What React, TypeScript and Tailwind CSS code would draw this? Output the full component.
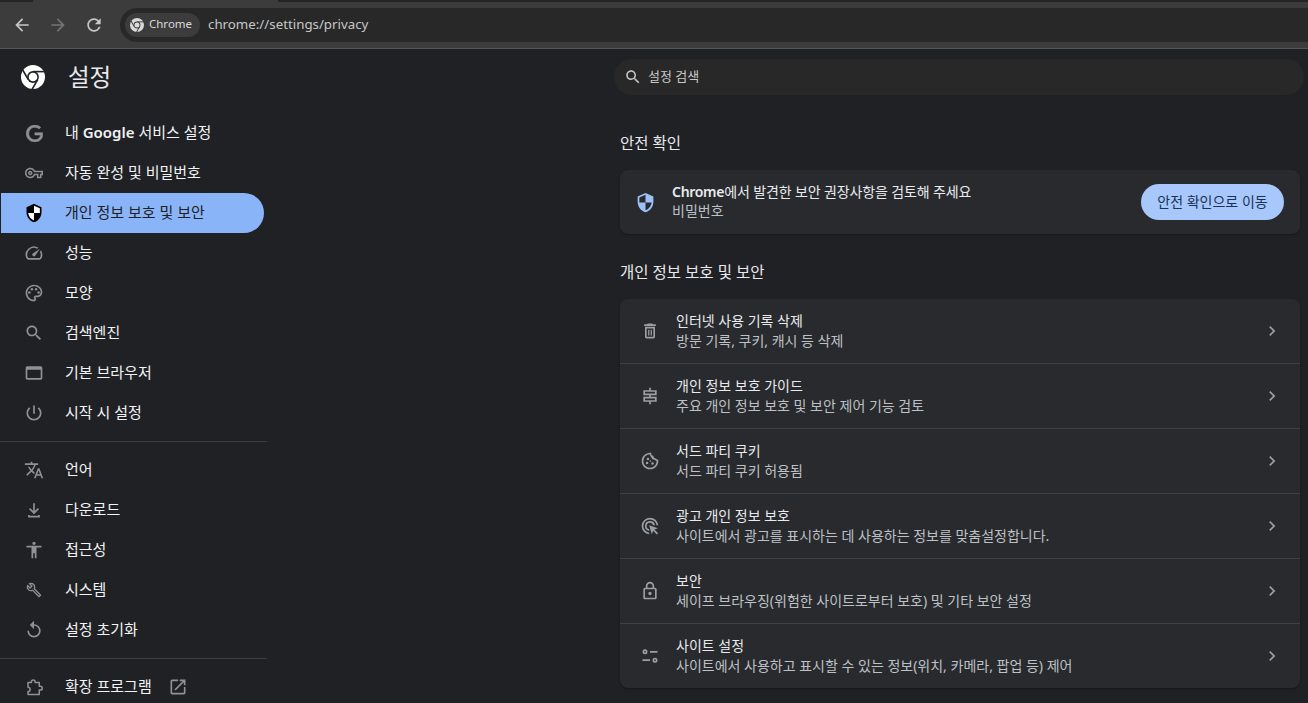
import type { ReactNode } from 'react';

const FONT = "font-['Noto_Sans','Noto_Sans_CJK_KR',sans-serif]";

function Icon({ children, className = 'h-5 w-5' }: { children: ReactNode; className?: string }) {
  return (
    <svg viewBox="0 0 24 24" fill="currentColor" className={className}>
      {children}
    </svg>
  );
}

// 크롬 로고: 흰 원 + 가운데 링 + 세 갈래 틈
function ChromeLogo({ className, gap }: { className: string; gap: string }) {
  return (
    <svg viewBox="0 0 24 24" className={className}>
      <circle cx="12" cy="12" r="12" fill="currentColor" />
      {[0, 120, 240].map((deg) => (
        <path key={deg} d="M12 6.6H23.5" stroke={gap} strokeWidth="1.6" transform={`rotate(${deg} 12 12)`} />
      ))}
      <circle cx="12" cy="12" r="5.9" fill={gap} />
      <circle cx="12" cy="12" r="4.3" fill="currentColor" />
    </svg>
  );
}

const Shield = ({ body, quad, mirror, className }: { body: string; quad: string; mirror?: boolean; className: string }) => (
  <svg viewBox="0 0 24 24" className={className}>
    <path fill={body} d="M12 1 3 5v6c0 5.55 3.84 10.74 9 12 5.16-1.26 9-6.45 9-12V5l-9-4z" />
    <path
      fill={quad}
      transform={mirror ? 'translate(24 0) scale(-1 1)' : undefined}
      d="M12 3.2 19 6.3V12h-7V3.2zM12 12v8.9c-3.7-1.15-6.45-4.8-7-8.9h7z"
    />
  </svg>
);

const icons: Record<string, ReactNode> = {
  google: (
    <Icon className="h-[17px] w-[17px] stroke-current stroke-[0.8]">
      <path d="M12.48 10.92v3.28h7.84c-.24 1.84-.853 3.187-1.787 4.133-1.147 1.147-2.933 2.4-6.053 2.4-4.827 0-8.6-3.893-8.6-8.72s3.773-8.72 8.6-8.72c2.6 0 4.507 1.027 5.907 2.347l2.307-2.307C18.747 1.44 16.133 0 12.48 0 5.867 0 .307 5.387.307 12s5.56 12 12.173 12c3.573 0 6.267-1.173 8.373-3.36 2.16-2.16 2.84-5.213 2.84-7.667 0-.76-.053-1.467-.173-2.053H12.48z" />
    </Icon>
  ),
  key: (
    <Icon className="h-[18px] w-[18px]">
      <path d="M22 19h-6v-4h-2.68c-1.14 2.42-3.6 4-6.32 4-3.86 0-7-3.14-7-7s3.14-7 7-7c2.72 0 5.17 1.58 6.32 4H24v6h-2v4zm-4-2h2v-4h2v-2H11.94l-.23-.67C11.01 8.34 9.11 7 7 7c-2.76 0-5 2.24-5 5s2.24 5 5 5c2.11 0 4.01-1.34 4.71-3.33l.23-.67H18v4zM7 15c-1.65 0-3-1.35-3-3s1.35-3 3-3 3 1.35 3 3-1.35 3-3 3zm0-4c-.55 0-1 .45-1 1s.45 1 1 1 1-.45 1-1-.45-1-1-1z" />
    </Icon>
  ),
  shield: <Shield body="#000000" quad="#ffffff" className="h-5 w-5" />,
  speed: (
    <Icon>
      <path d="M20.38 8.57l-1.23 1.85a8 8 0 0 1-.22 7.58H5.07A8 8 0 0 1 15.58 6.85l1.85-1.23A10 10 0 0 0 3.35 19a2 2 0 0 0 1.72 1h13.85a2 2 0 0 0 1.74-1 10 10 0 0 0-.27-10.44zm-9.79 6.84a2 2 0 0 0 2.83 0l5.66-8.49-8.49 5.66a2 2 0 0 0 0 2.83z" />
    </Icon>
  ),
  palette: (
    <Icon>
      <path d="M12 22C6.49 22 2 17.51 2 12S6.49 2 12 2s10 4.04 10 9c0 3.31-2.69 6-6 6h-1.77c-.28 0-.5.22-.5.5 0 .12.05.23.13.33.41.47.64 1.06.64 1.67 0 1.38-1.12 2.5-2.5 2.5zm0-18c-4.41 0-8 3.59-8 8s3.59 8 8 8c.28 0 .5-.22.5-.5 0-.16-.08-.28-.14-.35-.41-.46-.63-1.05-.63-1.65 0-1.38 1.12-2.5 2.5-2.5H16c2.21 0 4-1.79 4-4 0-3.86-3.59-7-8-7z" />
      <circle cx="6.5" cy="11.5" r="1.5" />
      <circle cx="9.5" cy="7.5" r="1.5" />
      <circle cx="14.5" cy="7.5" r="1.5" />
      <circle cx="17.5" cy="11.5" r="1.5" />
    </Icon>
  ),
  search: (
    <Icon>
      <path d="M15.5 14h-.79l-.28-.27C15.41 12.59 16 11.11 16 9.5 16 5.91 13.09 3 9.5 3S3 5.91 3 9.5 5.91 16 9.5 16c1.61 0 3.09-.59 4.23-1.57l.27.28v.79l5 4.99L20.49 19l-4.99-5zm-6 0C7.01 14 5 11.99 5 9.5S7.01 5 9.5 5 14 7.01 14 9.5 11.99 14 9.5 14z" />
    </Icon>
  ),
  browser: (
    <Icon>
      <path d="M20 4H4c-1.1 0-2 .9-2 2v12c0 1.1.9 2 2 2h16c1.1 0 2-.9 2-2V6c0-1.1-.9-2-2-2zm0 14H4V8h16v10z" />
    </Icon>
  ),
  power: (
    <Icon>
      <path d="M13 3h-2v10h2V3zm4.83 2.17l-1.42 1.42C17.99 7.86 19 9.81 19 12c0 3.87-3.13 7-7 7s-7-3.13-7-7c0-2.19 1.01-4.14 2.58-5.42L6.17 5.17C4.23 6.82 3 9.26 3 12c0 4.97 4.03 9 9 9s9-4.03 9-9c0-2.74-1.23-5.18-3.17-6.83z" />
    </Icon>
  ),
  translate: (
    <Icon>
      <path d="M12.87 15.07l-2.54-2.51.03-.03c1.74-1.94 2.98-4.17 3.71-6.53H17V4h-7V2H8v2H1v1.99h11.17C11.5 7.92 10.44 9.75 9 11.35 8.07 10.32 7.3 9.19 6.69 8h-2c.73 1.63 1.73 3.17 2.98 4.56l-5.09 5.02L4 19l5-5 3.11 3.11.76-2.04zM18.5 10h-2L12 22h2l1.12-3h4.75L21 22h2l-4.5-12zm-2.62 7l1.62-4.33L19.12 17h-3.24z" />
    </Icon>
  ),
  download: (
    <Icon>
      <path d="M11 4h2v9.2l3.6-3.6L18 11l-6 6-6-6 1.4-1.4 3.6 3.6V4zM5 18h2v1h10v-1h2v3H5v-3z" />
    </Icon>
  ),
  accessibility: (
    <Icon>
      <path d="M12 2c1.1 0 2 .9 2 2s-.9 2-2 2-2-.9-2-2 .9-2 2-2zm9 7h-6v13h-2v-6h-2v6H9V9H3V7h18v2z" />
    </Icon>
  ),
  wrench: (
    <Icon className="h-4 w-4">
      <path d="M22.61 18.99l-9.08-9.08c.93-2.34.45-5.1-1.44-7C9.79.61 6.21.4 3.66 2.25L7.5 6.1 6.08 7.5 2.25 3.69C.39 6.23.61 9.82 2.91 12.11c1.86 1.86 4.57 2.35 6.89 1.48l9.11 9.11c.39.39 1.02.39 1.41 0l2.3-2.3c.4-.38.4-1.01-.01-1.41zm-3 1.6l-9.46-9.46c-.61.45-1.29.72-2 .82-1.36.2-2.79-.21-3.83-1.25C3.37 9.76 2.93 8.5 3 7.26l3.09 3.09 4.24-4.24-3.09-3.09c1.24-.07 2.49.37 3.44 1.31 1.08 1.08 1.49 2.57 1.24 3.96-.12.71-.42 1.37-.88 1.96l9.45 9.45-.88.88z" />
    </Icon>
  ),
  reset: (
    <Icon>
      <path d="M12 5V1L7 6l5 5V7c3.31 0 6 2.69 6 6s-2.69 6-6 6-6-2.69-6-6H4c0 4.42 3.58 8 8 8s8-3.58 8-8-3.58-8-8-8z" />
    </Icon>
  ),
  extension: (
    <Icon className="h-[18px] w-[18px]">
      <path
        fill="none"
        stroke="currentColor"
        strokeWidth="2"
        strokeLinejoin="round"
        d="M4 6h4.5V5a2.5 2.5 0 0 1 5 0v1H19v5h1.5a2.5 2.5 0 0 1 0 5H19v6H4v-4a2.8 2.8 0 0 0 0-5.6V6z"
      />
    </Icon>
  ),
  trash: (
    <Icon>
      <path d="M6 19c0 1.1.9 2 2 2h8c1.1 0 2-.9 2-2V7H6v12zM8 9h8v10H8V9zm7.5-5l-1-1h-5l-1 1H5v2h14V4h-3.5z" />
      <path d="M9.75 10.5h1.5v7h-1.5zM12.75 10.5h1.5v7h-1.5z" />
    </Icon>
  ),
  signpost: (
    <Icon>
      <path d="M11 2h2v3h7v6h-7v2h7v6h-7v3h-2v-3H4v-6h7v-2H4V5h7V2zM6 7v2h12V7H6zm0 8v2h12v-2H6z" />
    </Icon>
  ),
  cookie: (
    <Icon>
      <path d="M12 2c.6 0 1.1.05 1.6.13a3 3 0 0 0 2.6 3.7 3 3 0 0 0 3.1 3.1 3 3 0 0 0 2.55 1.6c.1.5.15.97.15 1.47 0 5.5-4.5 10-10 10S2 17.5 2 12 6.5 2 12 2zm0 2a8 8 0 1 0 8 8v-.1a5 5 0 0 1-2.2-1.2 5 5 0 0 1-4.4-3.3A5 5 0 0 1 11.9 4H12z" />
      <circle cx="9.5" cy="9.5" r="1.5" />
      <circle cx="8.5" cy="14.5" r="1.5" />
      <circle cx="15" cy="15" r="1.5" />
      <circle cx="12.5" cy="12" r="1" />
    </Icon>
  ),
  adPrivacy: (
    <Icon>
      <path d="M11 22a10 10 0 1 1 10.9-10.9h-2A8 8 0 1 0 11 20v2z" />
      <path d="M11 17.9a6 6 0 1 1 6.9-6.9h-2.05A4 4 0 1 0 11 15.85v2.05z" />
      <path d="M11 11l10.5 3.6-4.3 1.7 4.5 4.5-1.4 1.4-4.5-4.5-1.7 4.3L11 11z" />
    </Icon>
  ),
  lock: (
    <Icon>
      <path d="M18 8h-1V6c0-2.76-2.24-5-5-5S7 3.24 7 6v2H6c-1.1 0-2 .9-2 2v10c0 1.1.9 2 2 2h12c1.1 0 2-.9 2-2V10c0-1.1-.9-2-2-2zM9 6c0-1.66 1.34-3 3-3s3 1.34 3 3v2H9V6zm9 14H6V10h12v10zm-6-3c1.1 0 2-.9 2-2s-.9-2-2-2-2 .9-2 2 .9 2 2 2z" />
    </Icon>
  ),
  tune: (
    <Icon>
      <path d="M6 4a3 3 0 1 1 0 6 3 3 0 0 1 0-6zm0 2a1 1 0 1 0 0 2 1 1 0 0 0 0-2zM12 6h9v2h-9zM18 14a3 3 0 1 1 0 6 3 3 0 0 1 0-6zm0 2a1 1 0 1 0 0 2 1 1 0 0 0 0-2zM3 16h9v2H3z" />
    </Icon>
  ),
};

const topNav: { icon: string; label: ReactNode; active?: boolean }[] = [
  {
    icon: 'google',
    label: (
      <>
        내 <span className="font-semibold">Google</span> 서비스 설정
      </>
    ),
  },
  { icon: 'key', label: '자동 완성 및 비밀번호' },
  { icon: 'shield', label: '개인 정보 보호 및 보안', active: true },
  { icon: 'speed', label: '성능' },
  { icon: 'palette', label: '모양' },
  { icon: 'search', label: '검색엔진' },
  { icon: 'browser', label: '기본 브라우저' },
  { icon: 'power', label: '시작 시 설정' },
];

const midNav = [
  { icon: 'translate', label: '언어' },
  { icon: 'download', label: '다운로드' },
  { icon: 'accessibility', label: '접근성' },
  { icon: 'wrench', label: '시스템' },
  { icon: 'reset', label: '설정 초기화' },
];

const rows = [
  { icon: 'trash', title: '인터넷 사용 기록 삭제', sub: '방문 기록, 쿠키, 캐시 등 삭제' },
  { icon: 'signpost', title: '개인 정보 보호 가이드', sub: '주요 개인 정보 보호 및 보안 제어 기능 검토' },
  { icon: 'cookie', title: '서드 파티 쿠키', sub: '서드 파티 쿠키 허용됨' },
  { icon: 'adPrivacy', title: '광고 개인 정보 보호', sub: '사이트에서 광고를 표시하는 데 사용하는 정보를 맞춤설정합니다.' },
  { icon: 'lock', title: '보안', sub: '세이프 브라우징(위험한 사이트로부터 보호) 및 기타 보안 설정' },
  { icon: 'tune', title: '사이트 설정', sub: '사이트에서 사용하고 표시할 수 있는 정보(위치, 카메라, 팝업 등) 제어' },
];

function NavItem({ icon, label, active }: { icon: string; label: ReactNode; active?: boolean }) {
  return (
    <div
      className={`ml-px flex h-10 w-[263px] items-center rounded-r-[20px] ${
        active ? 'bg-[#8ab4f8] text-[#202124]' : 'text-[#f1f3f4]'
      }`}
    >
      <span className={`flex w-[64px] shrink-0 justify-center pl-[2px] ${active ? '' : 'text-[#8f9194]'}`}>
        {icons[icon]}
      </span>
      <span className="pb-[2px] text-[15px]">{label}</span>
    </div>
  );
}

function Toolbar() {
  return (
    <div className="flex h-[49px] flex-col border-b border-[#55565a] bg-[#3c3c3c]">
      <div className="h-[2px] bg-[#242424] pl-[33px]">
        <div className="h-[2px] w-[245px] bg-[#3c3c3c]" />
      </div>
      <div className="flex flex-1 items-center pl-[12px]">
        <svg viewBox="0 0 24 24" fill="currentColor" className="h-5 w-5 text-[#c7c7c7]">
          <path d="M20 11H7.83l5.59-5.59L12 4l-8 8 8 8 1.41-1.41L7.83 13H20v-2z" />
        </svg>
        <svg viewBox="0 0 24 24" fill="currentColor" className="ml-[16px] h-5 w-5 text-[#747474]">
          <path d="M4 11h12.17l-5.59-5.59L12 4l8 8-8 8-1.41-1.41L16.17 13H4v-2z" />
        </svg>
        <svg viewBox="0 0 24 24" fill="currentColor" className="ml-[16px] h-5 w-5 text-[#c7c7c7]">
          <path d="M17.65 6.35C16.2 4.9 14.21 4 12 4c-4.42 0-7.99 3.58-7.99 8s3.57 8 7.99 8c3.73 0 6.84-2.55 7.73-6h-2.08c-.82 2.33-3.04 4-5.65 4-3.31 0-6-2.69-6-6s2.69-6 6-6c1.66 0 3.14.69 4.22 1.78L13 11h7V4l-2.35 2.35z" />
        </svg>
        <div className="ml-[16px] flex h-[34px] flex-1 items-center rounded-l-[17px] bg-[#282828] pl-[5px]">
          <div className="flex h-6 w-[75px] items-center rounded-xl bg-[#3c3c3c] pl-[5px] text-[#dadada]">
            <ChromeLogo className="h-[14px] w-[14px]" gap="#3c3c3c" />
            <span className="ml-[5px] pb-[2px] text-[11.5px]">Chrome</span>
          </div>
          <span className="ml-[8px] text-[13.3px] text-[#c7c7c7]">chrome://settings/privacy</span>
        </div>
      </div>
    </div>
  );
}

function Sidebar() {
  return (
    <aside className="w-[267px] shrink-0">
      <div className="flex h-[56px] items-center pl-[21px] text-white">
        <ChromeLogo className="h-6 w-6" gap="#202124" />
        <span className="ml-[23px] pt-[2px] text-[23.5px] text-[#e8eaed]">설정</span>
      </div>
      <nav className="mt-2">
        {topNav.map((item, i) => (
          <NavItem key={i} {...item} />
        ))}
        <div className="my-2 h-px bg-[#3c3d40]" />
        {midNav.map((item) => (
          <NavItem key={item.label} {...item} />
        ))}
        <div className="my-2 h-px bg-[#3c3d40]" />
        <div className="flex h-10 items-center pl-[25px] text-[#f1f3f4]">
          <span className="text-[#8f9194]">{icons.extension}</span>
          <span className="ml-[22px] pb-[2px] text-[15px]">확장 프로그램</span>
          <span className="ml-[16px] text-[#8f9194]">
            <Icon>
              <path d="M19 19H5V5h7V3H5c-1.11 0-2 .9-2 2v14c0 1.1.89 2 2 2h14c1.1 0 2-.9 2-2v-7h-2v7zM14 3v2h3.59l-9.83 9.83 1.41 1.41L19 6.41V10h2V3h-7z" />
            </Icon>
          </span>
        </div>
      </nav>
    </aside>
  );
}

function Main() {
  return (
    <main className="ml-[347px] mr-[4px] flex-1 pt-[10px]">
      <div className="flex h-9 items-center rounded-[18px] bg-[#282828] pl-[10px] text-[#c7c7c7]">
        <span className="[&_svg]:h-[18px] [&_svg]:w-[18px]">{icons.search}</span>
        <span className="ml-[6px] text-[13px]">설정 검색</span>
      </div>
      <div className="pl-[6px] pr-[4px]">
        <h2 className="mt-[38px] h-5 text-[15.5px] leading-5 text-[#e8eaed]">안전 확인</h2>
        <div className="mt-[17px] flex h-16 items-center rounded-lg bg-[#292a2d] pl-[15px] pr-[16px] shadow-[0_1px_2px_rgba(0,0,0,0.3)]">
          <Shield body="#9cc0fa" quad="#292a2d" mirror className="h-[21px] w-[21px]" />
          <div className="ml-[16px] flex-1 pb-[2px]">
            <div className="text-[14px] leading-[19px] tracking-[-0.13px] text-[#e8eaed]">
              <span className="font-semibold tracking-[-0.3px]">Chrome</span>에서 발견한 보안 권장사항을 검토해 주세요
            </div>
            <div className="text-[14px] leading-[19px] text-[#bdc1c6]">비밀번호</div>
          </div>
          <div className="flex h-9 w-[143px] items-center justify-center rounded-[18px] bg-[#a8c7fa] pb-[2px] text-[14px] text-[#1a3158]">
            안전 확인으로 이동
          </div>
        </div>
        <h2 className="mt-[28px] h-5 text-[15.5px] leading-5 text-[#e8eaed]">개인 정보 보호 및 보안</h2>
        <div className="mt-[17px] rounded-lg bg-[#292a2d] shadow-[0_1px_2px_rgba(0,0,0,0.3)]">
          {rows.map((row, i) => (
            <div
              key={row.title}
              className={`flex items-center pl-[20px] pr-[18px] ${
                i < rows.length - 1 ? 'h-[65px] border-b border-[#3f4043]' : 'h-16'
              }`}
            >
              <span className="text-[#9aa0a6]">{icons[row.icon]}</span>
              <div className="ml-[16px] flex-1">
                <div className="text-[14px] leading-[20px] text-[#e8eaed]">{row.title}</div>
                <div className="text-[14px] leading-[20px] text-[#bdc1c6]">{row.sub}</div>
              </div>
              <svg viewBox="0 0 24 24" fill="currentColor" className="h-5 w-5 text-[#9aa0a6]">
                <path d="M8.59 16.59 13.17 12 8.59 7.41 10 6l6 6-6 6-1.41-1.41z" />
              </svg>
            </div>
          ))}
        </div>
      </div>
    </main>
  );
}

export default function App() {
  return (
    <div className={`flex h-[703px] flex-col overflow-hidden bg-[#202124] ${FONT}`}>
      <Toolbar />
      <div className="flex flex-1 overflow-hidden">
        <Sidebar />
        <Main />
      </div>
    </div>
  );
}
